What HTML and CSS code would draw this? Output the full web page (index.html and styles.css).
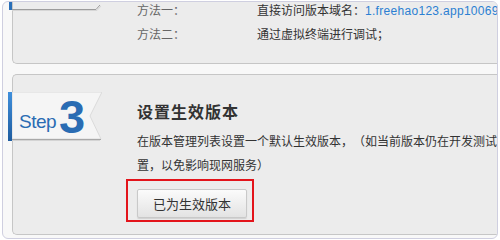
FILE: index.html
```html
<!DOCTYPE html>
<html lang="zh-CN">
<head>
<meta charset="utf-8">
<title>设置生效版本</title>
<link rel="stylesheet" href="styles.css">
</head>
<body>
<div class="frame">
  <section class="panel panel-top">
    <div class="ribbon-tail">
      <svg width="93" height="9" viewBox="0 0 93 9">
        <rect x="0" y="0" width="3" height="8" fill="#2a6fb8"/>
        <path d="M3 8.5 H88 L92 4" fill="none" stroke="#d6d6d6" stroke-width="1"/>
        <path d="M3 7.5 H87 L91 3" fill="none" stroke="#9c9c9c" stroke-width="1"/>
      </svg>
    </div>
    <dl class="rows">
      <div class="row"><dt>方法一：</dt><dd>直接访问版本域名：<a class="link" href="#">1.freehao123.app10069</a></dd></div>
      <div class="row"><dt>方法二：</dt><dd>通过虚拟终端进行调试；</dd></div>
    </dl>
  </section>
  <section class="panel panel-step">
    <div class="ribbon">
      <svg class="ribbon-bg" width="94" height="49" viewBox="0 0 94 49">
        <defs>
          <linearGradient id="bar" x1="0" y1="0" x2="0" y2="1">
            <stop offset="0" stop-color="#3f8fdc"/>
            <stop offset="1" stop-color="#1e5c9f"/>
          </linearGradient>
        </defs>
        <polygon points="4,0 94,0 82,24 93,47 4,47" fill="#f5f5f5" stroke="#dadada" stroke-width="1"/>
        <path d="M4 47.5 H93" stroke="#a8a8a8" stroke-width="1"/>
        <path d="M4 48.5 H92" stroke="#d4d4d4" stroke-width="1"/>
        <rect x="0" y="0" width="4" height="49" fill="url(#bar)"/>
      </svg>
      <div class="ribbon-label"><span class="step-word">Step</span><span class="step-num">3</span></div>
    </div>
    <div class="content">
      <h2 class="title">设置生效版本</h2>
      <p class="desc"><span class="line">在版本管理列表设置一个默认生效版本，（如当前版本仍在开发测试</span><span class="line">置，以免影响现网服务）</span></p>
      <div class="action">
        <button class="btn" type="button">已为生效版本</button>
        <span class="highlight"></span>
      </div>
    </div>
  </section>
</div>
</body>
</html>
```
FILE: styles.css
```css
html, body {
  margin: 0;
  padding: 0;
  background: #ffffff;
}

body {
  font-family: "Noto Sans CJK SC", "Liberation Sans", sans-serif;
  color: #333333;
  text-spacing-trim: space-all;
}

.frame {
  margin: 1px 2px 0 2px;
  border: 1px solid #cfcfe0;
  border-radius: 6px;
  background: #f8f8f8;
  padding: 0 0 3px 9px;
  overflow: hidden;
}

.panel {
  background: #ececec;
  border: 1px solid #c6c6c6;
  border-right: none;
  border-radius: 5px 0 0 5px;
  display: flex;
}

.panel-top {
  border-top: none;
  border-radius: 0 0 0 5px;
  padding: 0 0 21px 0;
}

.ribbon-tail {
  flex: none;
  margin-left: -4px;
  width: 93px;
  height: 9px;
}

.ribbon-tail svg {
  display: block;
}

.rows {
  margin: 0 0 0 35px;
  display: flex;
  flex-direction: column;
  gap: 7px;
  font-size: 12px;
  line-height: 16px;
  white-space: nowrap;
}

.row {
  display: flex;
}

.row dt {
  width: 120px;
  flex: none;
  color: #666666;
}

.row dd {
  margin: 0;
  color: #333333;
}

.link {
  color: #2b7fd2;
  text-decoration: none;
  font-family: "Liberation Sans", sans-serif;
  letter-spacing: 0.3px;
}

.panel-step {
  margin-top: 10px;
  padding: 17px 0 16px 0;
}

.ribbon {
  flex: none;
  position: relative;
  margin-left: -5px;
  width: 94px;
  height: 49px;
}

.ribbon-bg {
  position: absolute;
  left: 0;
  top: 0;
}

.ribbon-label {
  position: relative;
  height: 49px;
  box-sizing: border-box;
  display: flex;
  align-items: flex-end;
  padding: 0 0 6px 11px;
  color: #2a6cb3;
  font-family: "Liberation Sans", Arial, sans-serif;
}

.step-word {
  font-size: 19px;
  line-height: 18px;
  margin-bottom: 4px;
  letter-spacing: -0.5px;
}

.step-num {
  font-size: 47px;
  line-height: 36px;
  font-weight: bold;
  margin-left: 3px;
}

.content {
  margin-left: 35px;
  flex: 1;
  min-width: 0;
}

.title {
  margin: 9px 0 0 0;
  font-size: 16px;
  line-height: 20px;
  font-weight: bold;
  letter-spacing: 1px;
  color: #333333;
}

.desc {
  margin: 8px 0 0 0;
  font-size: 12px;
  line-height: 24px;
  color: #333333;
  white-space: nowrap;
}

.desc .line {
  display: block;
}

.action {
  position: relative;
  width: max-content;
  margin-top: 12px;
}

.btn {
  display: block;
  width: 110px;
  height: 29px;
  padding: 0;
  font-family: "Noto Sans CJK SC", sans-serif;
  font-size: 13px;
  color: #333333;
  background: linear-gradient(#fbfbfb, #e3e3e3);
  border: 1px solid #c9c9c9;
  border-radius: 2px;
  box-shadow: 0 1px 1px rgba(0, 0, 0, 0.12);
}

.highlight {
  position: absolute;
  left: -11px;
  top: -10px;
  right: -7px;
  bottom: -4px;
  border: 2px solid #e3141b;
  pointer-events: none;
}
```
